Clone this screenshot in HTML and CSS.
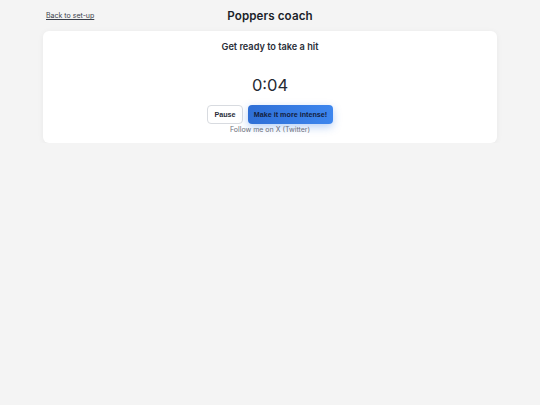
FILE: index.html
```html
<!DOCTYPE html>
<html>
<head>
<meta charset="utf-8">
<link rel="stylesheet" href="styles.css">
</head>
<body>
<header class="top">
  <a class="back" href="#">Back to set-up</a>
  <h1 class="title">Poppers coach</h1>
</header>
<main class="card">
  <h2 class="status">Get ready to take a hit</h2>
  <div class="timer">0:04</div>
  <div class="actions">
    <button class="btn btn-pause">Pause</button>
    <button class="btn btn-intense">Make it more intense!</button>
  </div>
  <a class="follow" href="#">Follow me on X (Twitter)</a>
</main>
</body>
</html>
```
FILE: styles.css
```css
html, body {
  margin: 0;
  padding: 0;
  background: #f4f4f4;
  font-family: "Inter", "Open Sans", sans-serif;
  color: #1f2430;
}
.top {
  position: relative;
  height: 31px;
  display: flex;
  align-items: center;
  justify-content: center;
}
.back {
  position: absolute;
  left: 46px;
  top: 11px;
  font-size: 7px;
  color: #3a3f4a;
  text-decoration: underline;
}
.title {
  margin: 0;
  font-size: 11.6px;
  font-weight: 600;
  color: #1b1f2a;
  letter-spacing: 0.1px;
}
.card {
  margin: 0 43px;
  background: #fff;
  border-radius: 6px;
  box-shadow: 0 1px 6px rgba(0,0,0,0.05);
  height: 112px;
  display: flex;
  flex-direction: column;
  align-items: center;
  box-sizing: border-box;
  padding-top: 9px;
}
.status {
  margin: 0;
  font-size: 9.2px;
  font-weight: 600;
  color: #2a2e38;
  line-height: 14px;
}
.timer {
  margin-top: 20px;
  font-size: 16.5px;
  font-weight: 400;
  color: #262a33;
  line-height: 22px;
}
.actions {
  margin-top: 9px;
  display: flex;
  gap: 5px;
}
.btn {
  font-family: "Liberation Sans", Arial, sans-serif;
  font-weight: 700;
  font-size: 7.2px;
  height: 19px;
  border-radius: 4px;
  padding: 0;
  cursor: pointer;
}
.btn-pause {
  width: 36px;
  background: #fff;
  border: 1px solid #d8dbe0;
  color: #2a2e38;
}
.btn-intense {
  width: 85px;
  border: none;
  color: #13203d;
  background: linear-gradient(90deg, #2f6fd6, #3d86ee);
  box-shadow: 0 3px 8px rgba(50,120,230,0.35);
}
.follow {
  margin-top: 1px;
  font-size: 7px;
  color: #6a6f7a;
  text-decoration: none;
}
```
